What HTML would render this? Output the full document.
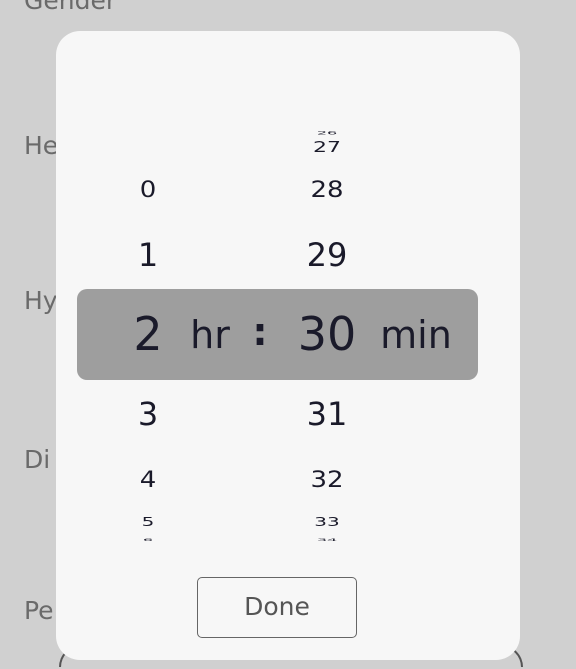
<!DOCTYPE html>
<html style="margin:0;width:576px;height:669px;overflow:hidden"><head><style>
body{margin:0;width:576px;height:669px;background:#d0d0d0;position:relative;overflow:hidden;font-family:"Liberation Sans","DejaVu Sans",sans-serif}
.lbl{position:absolute;left:24px;color:#6a6a6a;font-size:25px;font-family:"DejaVu Sans",sans-serif}
.dlg{position:absolute;left:56px;top:31px;width:464px;height:629px;background:#f7f7f7;border-radius:24px}
.n{position:absolute;color:#1a1a2a;font-family:"DejaVu Sans",sans-serif;transform-origin:center;text-align:center;width:100px;line-height:1}
.bar{position:absolute;left:77px;top:289px;width:401px;height:91px;background:#9e9e9e;border-radius:10px}
.btn{position:absolute;left:197px;top:577px;width:160px;height:61px;border:1.5px solid #666;border-radius:5px;box-sizing:border-box;color:#555;font-size:25px;text-align:center;line-height:58px;font-family:"DejaVu Sans",sans-serif}
</style></head><body>
<div class="lbl" style="top:-14px">Gender</div>
<div class="lbl" style="top:131px">He</div>
<div class="lbl" style="top:286px">Hy</div>
<div class="lbl" style="top:445px">Di</div>
<div class="lbl" style="top:596px">Pe</div>
<div style="position:absolute;left:59px;top:645px;width:460px;height:20px;border:2px solid #555;border-bottom:none;border-radius:24px 24px 0 0"></div>
<div class="dlg"></div>
<div class="n" style="left:277px;top:125px;font-size:16px;transform:scaleY(.25)">26</div>
<div class="n" style="left:277px;top:137px;font-size:22px;transform:scaleY(.7)">27</div>
<div class="n" style="left:98px;top:177px;font-size:26px;transform:scaleY(.85)">0</div>
<div class="n" style="left:277px;top:177px;font-size:26px;transform:scaleY(.85)">28</div>
<div class="n" style="left:98px;top:239px;font-size:32px">1</div>
<div class="n" style="left:277px;top:239px;font-size:32px">29</div>
<div class="bar"></div>
<div class="n" style="left:98px;top:311px;font-size:46px">2</div>
<div class="n" style="left:180px;top:316px;font-size:38px;width:60px">hr</div>
<div class="n" style="left:230px;top:313px;font-size:38px;width:60px;font-weight:bold">:</div>
<div class="n" style="left:277px;top:311px;font-size:46px">30</div>
<div class="n" style="left:366px;top:316px;font-size:38px;width:100px">min</div>
<div class="n" style="left:98px;top:398px;font-size:32px">3</div>
<div class="n" style="left:277px;top:398px;font-size:32px">31</div>
<div class="n" style="left:98px;top:467px;font-size:26px;transform:scaleY(.85)">4</div>
<div class="n" style="left:277px;top:467px;font-size:26px;transform:scaleY(.85)">32</div>
<div class="n" style="left:98px;top:512px;font-size:20px;transform:scaleY(.6)">5</div>
<div class="n" style="left:277px;top:512px;font-size:20px;transform:scaleY(.6)">33</div>
<div class="n" style="left:98px;top:532px;font-size:16px;transform:scaleY(.2)">6</div>
<div class="n" style="left:277px;top:532px;font-size:16px;transform:scaleY(.2)">34</div>
<div class="btn">Done</div>
</body></html>
